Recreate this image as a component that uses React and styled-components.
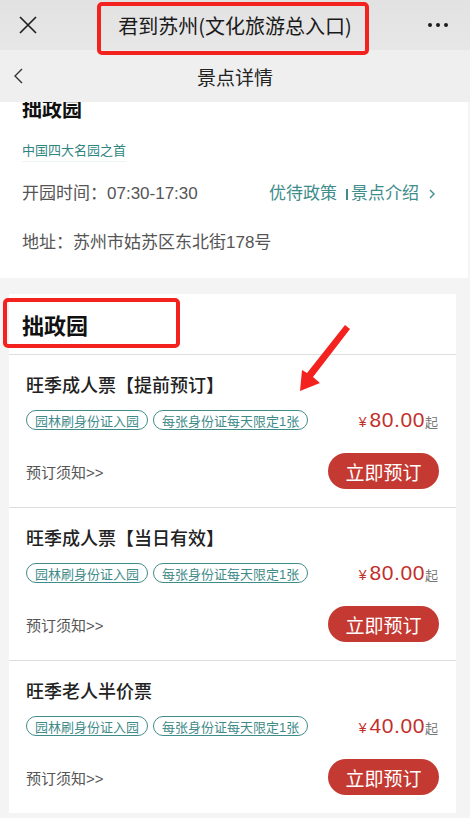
import React from 'react';
import styled, { createGlobalStyle } from 'styled-components';

const GlobalStyle = createGlobalStyle`
    html, body {
        margin: 0;
        padding: 0;
        background: #f4f4f4;
    }
    body {
        font-family: "Liberation Sans", "Noto Sans CJK SC", sans-serif;
        color: #222;
    }
`;

const Page = styled.div`
    position: relative;
    width: 470px;
    height: 818px;
    overflow: hidden;
    background: #f4f4f4;
`;

const WxBar = styled.div`
    height: 50px;
    display: flex;
    align-items: center;
    justify-content: space-between;
    padding: 0 22px 0 18px;
    background: linear-gradient(#e2e2e2, #e7e7e7);
`;

const WxTitle = styled.div`
    font-family: "Noto Sans CJK SC", sans-serif;
    font-size: 20px;
    color: #1a1a1a;
    margin-left: 4px;
`;

const Dots = styled.div`
    display: flex;
    gap: 4px;
    span {
        width: 4px;
        height: 4px;
        border-radius: 50%;
        background: #1d1d1d;
    }
`;

const NavBar = styled.div`
    height: 52px;
    display: grid;
    grid-template-columns: 60px 1fr 60px;
    align-items: center;
    background: #efefef;
    padding-left: 12px;
    padding-right: 12px;
`;

const NavTitle = styled.div`
    text-align: center;
    font-size: 19px;
    color: #222;
`;

const Scroll = styled.div`
    overflow: hidden;
    height: 716px;
`;

const InfoCard = styled.div`
    margin-top: -6px;
    margin-right: 2px;
    background: #fff;
    padding: 0 29px 23px 22px;
`;

const InfoTitle = styled.div`
    font-size: 20px;
    font-weight: 700;
    line-height: 28px;
    color: #111;
`;

const Slogan = styled.div`
    display: inline-block;
    margin-top: 17px;
    font-size: 13px;
    line-height: 20px;
    color: #2f8581;
    border-bottom: 1px solid #edf3f2;
`;

const InfoRow = styled.div`
    display: flex;
    align-items: center;
    justify-content: space-between;
    margin-top: ${p => p.gap}px;
    font-size: 17px;
    line-height: 24px;
    color: #555;
`;

const LinkGroup = styled.div`
    display: flex;
    align-items: center;
    color: #3f8d8b;
    font-size: 17px;
`;

const Divider = styled.span`
    display: inline-block;
    width: 2px;
    height: 11px;
    background: #3f8d8b;
    margin: 0 3px 0 9px;
`;

const TicketCard = styled.div`
    margin: 16px 14px 0 9px;
    background: #fff;
`;

const CardHead = styled.div`
    height: 60px;
    display: flex;
    align-items: center;
    padding-left: 13px;
    font-size: 22px;
    font-weight: 700;
    color: #111;
`;

const Ticket = styled.div`
    border-top: 1px solid #dedede;
    padding: 17px 17px 0 17px;
    height: 135px;
`;

const TicketName = styled.div`
    font-size: 18px;
    font-weight: 500;
    line-height: 28px;
    color: #222;
`;

const Row = styled.div`
    display: flex;
    align-items: center;
    justify-content: space-between;
    margin-top: ${p => p.gap}px;
`;

const Tags = styled.div`
    display: flex;
    gap: 5px;
`;

const Tag = styled.span`
    height: 18px;
    display: inline-flex;
    align-items: center;
    padding: 0 8px;
    border: 1.5px solid #3f8b89;
    border-radius: 10px;
    font-size: 13px;
    color: #3f8b89;
`;

const Price = styled.div`
    display: flex;
    align-items: baseline;
    color: #c3302b;
    margin-right: 1px;
`;

const Yen = styled.span`
    font-size: 14px;
    margin-right: 3px;
`;

const Amount = styled.span`
    font-size: 21px;
    font-weight: 500;
    letter-spacing: 0.6px;
`;

const From = styled.span`
    font-size: 13px;
    color: #777;
`;

const Notice = styled.div`
    font-size: 15px;
    color: #555;
`;

const BookButton = styled.button`
    width: 111px;
    height: 36px;
    border: none;
    border-radius: 18px;
    background: #c43a33;
    color: #fff;
    font-family: inherit;
    font-size: 19px;
    padding: 0;
    cursor: pointer;
`;

const Mark = styled.div`
    position: absolute;
    left: ${p => p.x}px;
    top: ${p => p.y}px;
    width: ${p => p.w}px;
    height: ${p => p.h}px;
    box-sizing: border-box;
    border: 4px solid #f4221e;
    border-radius: 5px;
    pointer-events: none;
`;

const ArrowLayer = styled.svg`
    position: absolute;
    left: 0;
    top: 0;
    pointer-events: none;
`;

const tickets = [
    { name: '旺季成人票【提前预订】', price: '80.00' },
    { name: '旺季成人票【当日有效】', price: '80.00' },
    { name: '旺季老人半价票', price: '40.00' },
];

function CloseIcon() {
    return (
        <svg width="20" height="18" viewBox="0 0 20 18">
            <path d="M2 1 L18 17 M18 1 L2 17" stroke="#1f1f1f" strokeWidth="1.7" fill="none" />
        </svg>
    );
}

function BackIcon() {
    return (
        <svg width="12" height="16" viewBox="0 0 12 16">
            <path d="M10 1 L3 8 L10 15" stroke="#333" strokeWidth="1.4" fill="none" />
        </svg>
    );
}

function Chevron() {
    return (
        <svg width="14" height="12" viewBox="0 0 14 12" style={{ marginLeft: 6 }}>
            <path d="M5 2 L9 6 L5 10" stroke="#3f8d8b" strokeWidth="1.4" fill="none" />
        </svg>
    );
}

export default function App() {
    return (
        <Page>
            <GlobalStyle />
            <WxBar>
                <CloseIcon />
                <WxTitle>君到苏州(文化旅游总入口)</WxTitle>
                <Dots><span /><span /><span /></Dots>
            </WxBar>
            <NavBar>
                <BackIcon />
                <NavTitle>景点详情</NavTitle>
                <div />
            </NavBar>
            <Scroll>
                <InfoCard>
                    <InfoTitle>拙政园</InfoTitle>
                    <Slogan>中国四大名园之首</Slogan>
                    <InfoRow gap={20}>
                        <span>开园时间：07:30-17:30</span>
                        <LinkGroup>
                            优待政策<Divider />景点介绍<Chevron />
                        </LinkGroup>
                    </InfoRow>
                    <InfoRow gap={25}>
                        <span>地址：苏州市姑苏区东北街178号</span>
                    </InfoRow>
                </InfoCard>
                <TicketCard>
                    <CardHead>拙政园</CardHead>
                    {tickets.map(t => (
                        <Ticket key={t.name}>
                            <TicketName>{t.name}</TicketName>
                            <Row gap={8}>
                                <Tags>
                                    <Tag>园林刷身份证入园</Tag>
                                    <Tag>每张身份证每天限定1张</Tag>
                                </Tags>
                                <Price>
                                    <Yen>¥</Yen>
                                    <Amount>{t.price}</Amount>
                                    <From>起</From>
                                </Price>
                            </Row>
                            <Row gap={21}>
                                <Notice>预订须知&gt;&gt;</Notice>
                                <BookButton>立即预订</BookButton>
                            </Row>
                        </Ticket>
                    ))}
                </TicketCard>
            </Scroll>
            <Mark x={97} y={2} w={272} h={53} />
            <Mark x={3} y={298} w={177} h={50} />
            <ArrowLayer width="470" height="818">
                <polygon points="345,325 350,329 313,377 320,383 300,391 302,370 307,373" fill="#f4221e" />
            </ArrowLayer>
        </Page>
    );
}
